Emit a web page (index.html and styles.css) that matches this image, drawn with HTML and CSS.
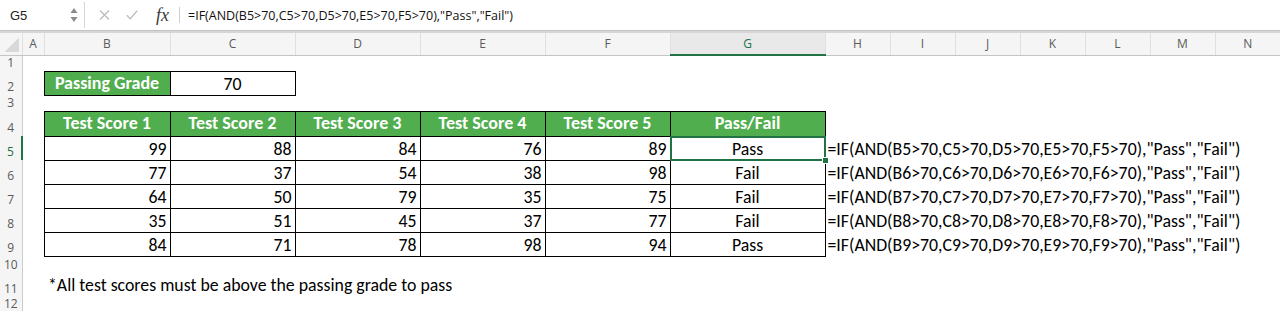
FILE: index.html
```html
<!DOCTYPE html>
<html>
<head>
<meta charset="utf-8">
<link rel="stylesheet" href="styles.css">
</head>
<body>
<div class="fbar">
  <div class="namebox">
    <span>G5</span>
    <svg class="spin" width="8" height="16" viewBox="0 0 8 16"><path d="M4 1 L7.5 6 L0.5 6 Z" fill="#8a8a8a"/><path d="M0.5 10 L7.5 10 L4 15 Z" fill="#8a8a8a"/></svg>
  </div>
  <div class="ficons">
    <svg class="ico" width="11" height="10" viewBox="0 0 11 10"><path d="M1 0.5 L10 9.5 M10 0.5 L1 9.5" stroke="#bdbdbd" stroke-width="1.3" fill="none"/></svg>
    <svg class="ico" width="12" height="10" viewBox="0 0 12 10"><path d="M0.8 5.2 L4.2 8.8 L11.2 0.8" stroke="#bdbdbd" stroke-width="1.3" fill="none"/></svg>
    <span class="fx">fx</span>
  </div>
  <div class="ftext">=IF(AND(B5&gt;70,C5&gt;70,D5&gt;70,E5&gt;70,F5&gt;70),"Pass","Fail")</div>
</div>
<table class="sheet">
  <colgroup>
    <col class="w22"><col class="w22"><col class="w126"><col class="w125"><col class="w125"><col class="w125"><col class="w125"><col class="w155"><col class="w65"><col class="w65"><col class="w65"><col class="w65"><col class="w65"><col class="w65"><col class="w65">
  </colgroup>
  <thead>
    <tr class="colhead">
      <th class="corner"></th><th>A</th><th>B</th><th>C</th><th>D</th><th>E</th><th>F</th><th class="selcol">G</th><th>H</th><th>I</th><th>J</th><th>K</th><th>L</th><th>M</th><th>N</th>
    </tr>
  </thead>
  <tbody>
    <tr class="h16"><th class="rh">1</th><td colspan="14"></td></tr>
    <tr class="h24"><th class="rh">2</th><td></td><td class="hd">Passing Grade</td><td class="bx ctr">70</td><td colspan="11"></td></tr>
    <tr class="h16"><th class="rh">3</th><td colspan="14"></td></tr>
    <tr class="h25"><th class="rh">4</th><td></td><td class="hd">Test Score 1</td><td class="hd">Test Score 2</td><td class="hd">Test Score 3</td><td class="hd">Test Score 4</td><td class="hd">Test Score 5</td><td class="hd">Pass/Fail</td><td colspan="7"></td></tr>
    <tr class="h24"><th class="rh selrow">5</th><td></td><td class="bx num">99</td><td class="bx num">88</td><td class="bx num">84</td><td class="bx num">76</td><td class="bx num">89</td><td class="bx ctr sel">Pass</td><td class="fm" colspan="7">=IF(AND(B5&gt;70,C5&gt;70,D5&gt;70,E5&gt;70,F5&gt;70),"Pass","Fail")</td></tr>
    <tr class="h24"><th class="rh">6</th><td></td><td class="bx num">77</td><td class="bx num">37</td><td class="bx num">54</td><td class="bx num">38</td><td class="bx num">98</td><td class="bx ctr">Fail</td><td class="fm" colspan="7">=IF(AND(B6&gt;70,C6&gt;70,D6&gt;70,E6&gt;70,F6&gt;70),"Pass","Fail")</td></tr>
    <tr class="h24"><th class="rh">7</th><td></td><td class="bx num">64</td><td class="bx num">50</td><td class="bx num">79</td><td class="bx num">35</td><td class="bx num">75</td><td class="bx ctr">Fail</td><td class="fm" colspan="7">=IF(AND(B7&gt;70,C7&gt;70,D7&gt;70,E7&gt;70,F7&gt;70),"Pass","Fail")</td></tr>
    <tr class="h24"><th class="rh">8</th><td></td><td class="bx num">35</td><td class="bx num">51</td><td class="bx num">45</td><td class="bx num">37</td><td class="bx num">77</td><td class="bx ctr">Fail</td><td class="fm" colspan="7">=IF(AND(B8&gt;70,C8&gt;70,D8&gt;70,E8&gt;70,F8&gt;70),"Pass","Fail")</td></tr>
    <tr class="h24"><th class="rh">9</th><td></td><td class="bx num">84</td><td class="bx num">71</td><td class="bx num">78</td><td class="bx num">98</td><td class="bx num">94</td><td class="bx ctr">Pass</td><td class="fm" colspan="7">=IF(AND(B9&gt;70,C9&gt;70,D9&gt;70,E9&gt;70,F9&gt;70),"Pass","Fail")</td></tr>
    <tr class="h17"><th class="rh">10</th><td colspan="14"></td></tr>
    <tr class="h24"><th class="rh">11</th><td></td><td class="note" colspan="13">*All test scores must be above the passing grade to pass</td></tr>
    <tr class="h15"><th class="rh">12</th><td colspan="14"></td></tr>
  </tbody>
</table>
</body>
</html>
```
FILE: styles.css
```css
html, body {
  margin: 0;
  padding: 0;
  background: #ffffff;
}
body {
  width: 1280px;
  height: 311px;
  overflow: hidden;
  font-family: "Carlito", "Open Sans", "Liberation Sans", sans-serif;
}

/* formula bar */
.fbar {
  display: flex;
  align-items: center;
  height: 30px;
  border-bottom: 1px solid #c2c2c2;
  background: #ffffff;
}
.namebox {
  width: 85px;
  height: 26px;
  box-sizing: border-box;
  display: flex;
  align-items: center;
  justify-content: space-between;
  padding: 0 6px 0 10px;
  border-right: 1px solid #d6d6d6;
  font-family: "Liberation Sans", sans-serif;
  font-size: 13px;
  color: #222;
}
.ficons {
  width: 95px;
  height: 16px;
  box-sizing: border-box;
  display: flex;
  align-items: center;
  padding-left: 14px;
  gap: 16px;
  border-right: 1px solid #cfcfcf;
}
.fx {
  font-family: "Liberation Serif", "DejaVu Serif", serif;
  font-style: italic;
  font-size: 18px;
  color: #3a3a3a;
  margin-left: 2px;
  line-height: 16px;
}
.ftext {
  padding-left: 8px;
  font-family: "Open Sans", sans-serif;
  font-size: 12.5px;
  color: #111;
  white-space: nowrap;
}

/* sheet */
.sheet {
  table-layout: fixed;
  border-collapse: collapse;
  width: 1280px;
}
.w22 { width: 22px; }
.w126 { width: 126px; }
.w125 { width: 125px; }
.w155 { width: 155px; }
.w65 { width: 65px; }

.colhead th {
  height: 21px;
  padding: 0;
  background: #f5f5f5;
  border-top: 2px solid #d6d6d6;
  border-bottom: 1px solid #c4c4c4;
  border-left: 1px solid #e0e0e0;
  font-family: "Open Sans", sans-serif;
  font-weight: normal;
  font-size: 12px;
  color: #5a5a5a;
  text-align: center;
  vertical-align: middle;
}
.colhead th.corner {
  border-left: none;
  background: linear-gradient(135deg, #f5f5f5 50%, #d9d9d9 50%);
  background-size: 15px 15px;
  background-position: right 3px bottom 3px;
  background-repeat: no-repeat;
  background-color: #f5f5f5;
}
.colhead th.selcol {
  background: #e9e9e9;
  color: #217346;
  border-bottom: 2px solid #217346;
}

.rh {
  padding: 0 0 1px 0;
  background: #f5f5f5;
  border-right: 1px solid #cccccc;
  font-family: "Open Sans", sans-serif;
  font-weight: normal;
  font-size: 12px;
  line-height: 14px;
  color: #5a5a5a;
  text-align: center;
  vertical-align: bottom;
}
.rh.selrow {
  color: #217346;
  border-right: 2px solid #217346;
}

.h15 { height: 15px; }
.h16 { height: 16px; }
.h17 { height: 17px; }
.h24 { height: 24px; }
.h25 { height: 25px; }

td {
  padding: 0;
  font-size: 17.8px;
  line-height: 21px;
  color: #000;
  white-space: nowrap;
  vertical-align: bottom;
}
.hd {
  background: #50ae4f;
  color: #ffffff;
  font-weight: bold;
  font-size: 18px;
  text-align: center;
  border: 1px solid #000;
  vertical-align: middle;
}
.bx {
  border: 1px solid #000;
}
.ctr {
  text-align: center;
}
.num {
  text-align: right;
  padding-right: 3px;
}
.sel {
  position: relative;
}
.sel::after {
  content: "";
  position: absolute;
  left: -1px;
  top: -1px;
  right: -1px;
  bottom: -1px;
  border: 2px solid #217346;
}
.sel::before {
  content: "";
  position: absolute;
  right: -4px;
  bottom: -4px;
  width: 5px;
  height: 5px;
  background: #217346;
  border: 1px solid #fff;
  z-index: 2;
}
.fm {
  padding-left: 2px;
  overflow: visible;
}
.note {
  padding-left: 4px;
  vertical-align: middle;
}
```
